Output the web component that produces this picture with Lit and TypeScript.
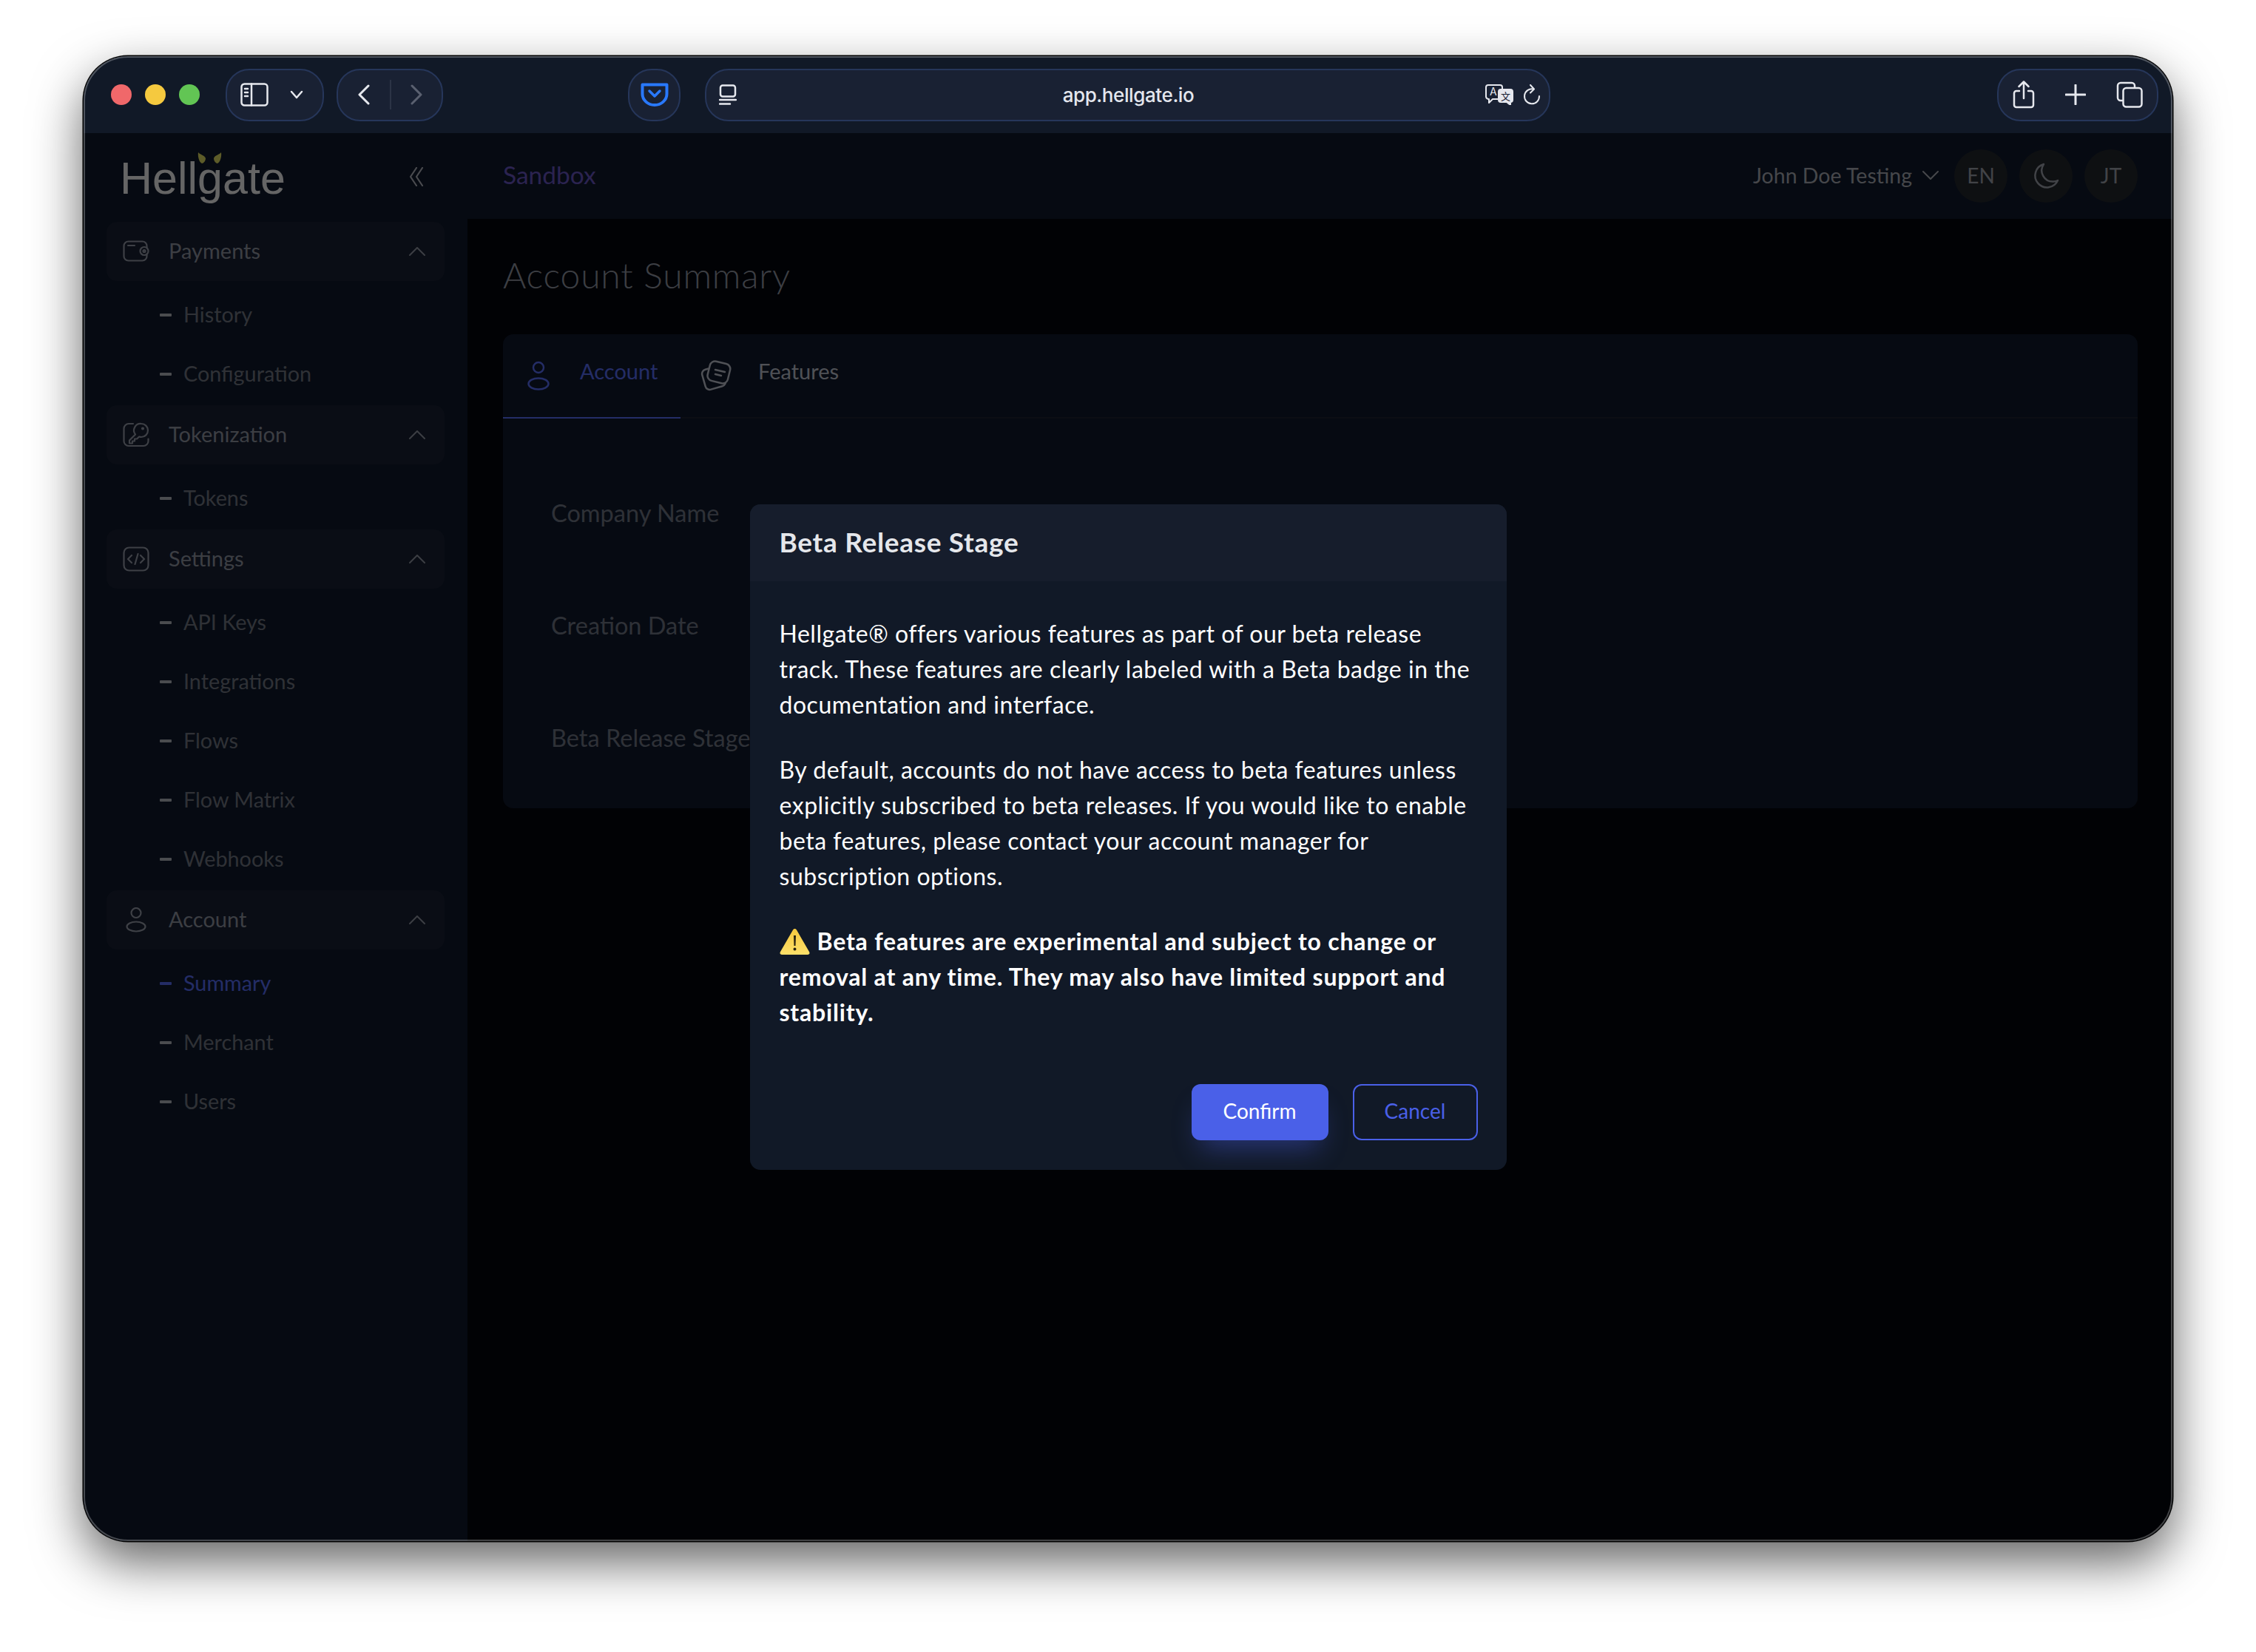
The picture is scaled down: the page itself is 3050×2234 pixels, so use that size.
import { LitElement, html, css, svg } from "lit";
import { customElement } from "lit/decorators.js";

const ICON_WALLET = svg`<rect x="1.500" y="1.500" width="31" height="26" rx="6"/><path d="M7 7h9"/><circle cx="29" cy="14.500" r="5.500" fill="#192135"/><circle cx="29" cy="14.500" r="1.500"/>`;
const ICON_KEY = svg`<path d="M14 1.500H8a6.500 6.500 0 0 0-6.500 6.500v17a6.500 6.500 0 0 0 6.500 6.500h20a6.500 6.500 0 0 0 6.500-6.500v-3"/><path d="M25 1.500a9 9 0 0 1 0 18c-1 0-2-.2-2.800-.5L19 22h-3v3h-3v3H9v-4l8-8a9 9 0 0 1 8-14.500z"/><circle cx="27" cy="8" r="1"/>`;
const ICON_CODE = svg`<rect x="1.500" y="1.500" width="33" height="31" rx="7"/><path d="M12 12l-5 5 5 5M24 12l5 5-5 5M20.500 10l-4 14"/>`;
const ICON_USER = svg`<circle cx="18" cy="7.500" r="6.500"/><ellipse cx="18" cy="26" rx="12.500" ry="6.500"/>`;

const NAV = [
  { label: "Payments", icon: ICON_WALLET, box: "0 0 36 30", items: ["History", "Configuration"] },
  { label: "Tokenization", icon: ICON_KEY, box: "0 0 36 33", items: ["Tokens"] },
  { label: "Settings", icon: ICON_CODE, box: "0 0 36 34", items: ["API Keys", "Integrations", "Flows", "Flow Matrix", "Webhooks"] },
  { label: "Account", icon: ICON_USER, box: "0 0 36 34", items: ["Summary", "Merchant", "Users"] },
];

@customElement("app-root")
export class AppRoot extends LitElement {
  static styles = css`
    :host {
      display: block;
      width: 3050px;
      height: 2234px;
      padding: 76px 113px 150px;
      box-sizing: border-box;
      background: #fff;
      font-family: Lato, "Open Sans", sans-serif;
      overflow: hidden;
    }
    svg {
      display: block;
      flex: none;
      fill: none;
      stroke: currentColor;
      stroke-linecap: round;
      stroke-linejoin: round;
    }

    .window {
      width: 2824px;
      height: 2008px;
      display: flex;
      flex-direction: column;
      border-radius: 60px;
      overflow: hidden;
      position: relative;
      background: #111927;
    }
    .shadow {
      position: absolute;
      left: 113px;
      top: 76px;
      width: 2824px;
      height: 2008px;
      border-radius: 60px;
      box-shadow: 0 0 0 1.500px #000, 0 28px 68px rgba(0, 0, 0, 0.62);
    }
    .rim {
      position: absolute;
      inset: 0;
      border-radius: 60px;
      border: 2px solid rgba(255, 255, 255, 0.26);
      pointer-events: none;
      z-index: 5;
    }

    /* browser chrome */
    .toolbar {
      height: 104px;
      flex: none;
      display: flex;
      align-items: center;
      padding: 0 19px 0 37px;
      background: #111927;
      color: #e6e8ee;
    }
    .lights {
      display: flex;
      gap: 18px;
      margin-right: 35px;
    }
    .lights i {
      width: 28px;
      height: 28px;
      border-radius: 50%;
    }
    .pill {
      height: 71px;
      box-sizing: border-box;
      display: flex;
      align-items: center;
      background: #192133;
      border: 2px solid #26365a;
      border-radius: 32px;
    }
    .pill-side {
      width: 133px;
      padding-left: 18px;
      margin-right: 17px;
    }
    .pill-side .caret {
      margin-left: 29px;
    }
    .pill-nav {
      width: 144px;
      padding-left: 26px;
      margin-right: 250px;
    }
    .pill-nav .sep {
      width: 2px;
      height: 40px;
      background: #2c3446;
      margin: 0 26px 0 27px;
    }
    .pill-shield {
      width: 71px;
      justify-content: center;
      margin-right: 33px;
    }
    .pill-url {
      width: 1143px;
      padding: 0 11px 0 17px;
      position: relative;
    }
    .url {
      position: absolute;
      left: 2px;
      right: 0;
      top: 18px;
      text-align: center;
      font-size: 26px;
      font-weight: 500;
      font-family: Inter, sans-serif;
      letter-spacing: -0.400px;
      color: #e4e7ee;
    }
    .pill-url .translate {
      margin-left: auto;
    }
    .pill-url .reload {
      margin-left: 13px;
    }
    .pill-right {
      width: 218px;
      margin-left: auto;
      padding-left: 19px;
    }
    .pill-right .plus {
      margin: 0 41px;
    }

    /* app behind the modal */
    .app {
      flex: 1;
      display: flex;
      position: relative;
      min-height: 0;
    }
    .sidebar {
      width: 519px;
      flex: none;
      box-sizing: border-box;
      padding: 0 31px;
      background: #0f1a2d;
    }
    .logo {
      height: 120px;
      display: flex;
      align-items: center;
      justify-content: space-between;
      padding: 0 25px 0 18px;
      position: relative;
    }
    .logo-text {
      font-family: "Liberation Sans", Arial, sans-serif;
      font-size: 61px;
      color: #fcfcfc;
      line-height: 60px;
      margin-top: 2px;
    }
    .horns {
      position: absolute;
      left: 123px;
      top: 26px;
    }
    .collapse {
      color: #b8bcc6;
      margin-top: -3px;
      margin-right: 3px;
    }
    .group {
      height: 80px;
      display: flex;
      align-items: center;
      background: #192135;
      border-radius: 14px;
      padding: 0 26px 0 22px;
      color: #969ba9;
      font-size: 29px;
    }
    .group .icon-slot {
      width: 62px;
      flex: none;
    }
    .group span {
      margin-top: -4px;
    }
    .group .chev {
      margin-left: auto;
    }
    .sub {
      padding: 6px 0 2px;
    }
    .item {
      height: 80px;
      box-sizing: border-box;
      display: flex;
      align-items: center;
      padding: 0 0 3px 72px;
      color: #767c88;
      font-size: 28.800px;
    }
    .item::before {
      content: "";
      width: 16px;
      height: 4px;
      background: #babdc6;
      border-radius: 1px;
      margin: 3px 16px 0 0;
    }
    .item.active {
      color: #5a70ff;
    }
    .item.active::before {
      background: #5a70ff;
    }

    .main {
      flex: 1;
      min-width: 0;
      background: #03050d;
    }
    .topbar {
      height: 116px;
      display: flex;
      align-items: center;
      padding: 0 47px 0 48px;
      background: #0f1a2d;
    }
    .env {
      font-size: 33.500px;
      color: #6b58c8;
      margin-right: auto;
      margin-top: -4px;
    }
    .user {
      display: flex;
      align-items: center;
      gap: 14px;
      font-size: 28.500px;
      color: #aeb2bb;
      margin-right: 5px;
      padding-bottom: 3px;
    }
    .circle {
      width: 72px;
      height: 72px;
      border-radius: 50%;
      background: #25282f;
      display: flex;
      align-items: center;
      justify-content: center;
      font-size: 28px;
      color: #a4a8b2;
      margin-left: 16px;
    }
    .circle span {
      margin-top: -3px;
    }
    .content {
      padding: 46px 47px 0 48px;
    }
    .title {
      font-size: 48px;
      line-height: 60px;
      font-weight: 300;
      letter-spacing: 0.800px;
      color: #969ba9;
      margin: 0 0 50px;
    }
    .card {
      background: #111a2d;
      border-radius: 14px;
    }
    .tabs {
      display: flex;
      height: 114px;
      box-sizing: border-box;
      border-bottom: 2px solid #1e2434;
    }
    .tab {
      display: flex;
      align-items: center;
      font-size: 29px;
      color: #c6cad6;
      margin-bottom: -2px;
      border-bottom: 2px solid transparent;
    }
    .tab span {
      margin-top: -14px;
    }
    .tab.active {
      color: #5a70ff;
      border-bottom-color: #5a70ff;
      width: 240px;
      box-sizing: border-box;
      padding-left: 33px;
    }
    .tab.active svg {
      margin-right: 41px;
    }
    .tab.features {
      padding-left: 27px;
    }
    .tab.features svg {
      margin-right: 35px;
    }
    .rows {
      padding: 51px 65px 20px;
    }
    .row {
      height: 152px;
      display: flex;
      align-items: center;
      font-size: 32.500px;
      color: #747a8a;
    }

    /* modal */
    .overlay {
      position: absolute;
      inset: 0;
      display: flex;
      align-items: center;
      justify-content: center;
      background: rgba(0, 0, 0, 0.6);
    }
    .dialog {
      width: 1023px;
      height: 900px;
      box-sizing: border-box;
      background: #111927;
      border-radius: 14px;
      overflow: hidden;
      display: flex;
      flex-direction: column;
      color: #fff;
    }
    .dialog-head {
      height: 104px;
      flex: none;
      display: flex;
      align-items: center;
      padding: 0 40px 4px;
      box-sizing: border-box;
      background: #161d2c;
      font-size: 37px;
      font-weight: 700;
      letter-spacing: 0.700px;
      color: #e5e7eb;
    }
    .dialog-body {
      padding: 47px 40px 0;
      font-size: 32px;
      letter-spacing: 0.520px;
      line-height: 48px;
      white-space: nowrap;
    }
    .dialog-body p {
      margin: 0 0 40px;
    }
    .warn {
      font-weight: 700;
      letter-spacing: 0.800px;
    }
    .warn svg {
      display: inline-block;
      vertical-align: -6px;
      margin-right: 10px;
    }
    .dialog-foot {
      margin-top: auto;
      display: flex;
      justify-content: flex-end;
      gap: 33px;
      padding: 0 39px 40px;
    }
    button {
      height: 76px;
      border-radius: 12px;
      font: inherit;
      font-size: 28px;
      box-sizing: border-box;
      padding: 0 0 4px;
    }
    .confirm {
      width: 185px;
      border: none;
      background: #4a60e8;
      color: #fff;
      box-shadow: 0 22px 36px -12px rgba(74, 96, 232, 0.42);
    }
    .cancel {
      width: 169px;
      border: 2.500px solid #4a60e8;
      background: transparent;
      color: #4a60e8;
    }
  `;

  renderToolbar() {
    return html`
      <div class="toolbar">
        <div class="lights">
          <i style="background:#f0686a"></i>
          <i style="background:#f5c93f"></i>
          <i style="background:#62c554"></i>
        </div>
        <div class="pill pill-side">
          <svg width="38" height="32" viewBox="0 0 38 32" stroke-width="2.500">
            <rect x="1.500" y="1.500" width="35" height="29" rx="4" />
            <path d="M15 1.500v29M6 8h4M6 13h4M6 18h4" />
          </svg>
          <svg class="caret" width="18" height="12" viewBox="0 0 18 12" stroke-width="2.500"><path d="M2 2l7 8 7-8" /></svg>
        </div>
        <div class="pill pill-nav">
          <svg width="17" height="28" viewBox="0 0 17 28" stroke-width="3"><path d="M15 2L3 14l12 12" /></svg>
          <div class="sep"></div>
          <svg width="17" height="28" viewBox="0 0 17 28" stroke-width="3" style="color:#5a6070"><path d="M2 2l12 12L2 26" /></svg>
        </div>
        <div class="pill pill-shield">
          <svg width="38" height="32" viewBox="0 0 38 32" stroke-width="4" style="color:#2979ff">
            <path d="M2.500 2.500h33V15a16.500 15 0 0 1-33 0z" />
            <path d="M12 11l7 7 7-7" stroke-width="3.500" />
          </svg>
        </div>
        <div class="pill pill-url">
          <svg width="24" height="28" viewBox="0 0 24 28" stroke-width="2.500">
            <rect x="2" y="1.500" width="20" height="15" rx="3" />
            <path d="M1 21h22M1 26.500h14" />
          </svg>
          <span class="url">app.hellgate.io</span>
          <svg class="translate" width="38" height="28" viewBox="0 0 38 28" stroke-width="2">
            <path d="M4 1h16a3 3 0 0 1 3 3v13a3 3 0 0 1-3 3H10l-5 5v-5a4 4 0 0 1-4-3V4a3 3 0 0 1 3-3z" fill="#192133" />
            <text x="6" y="15" font-size="14" fill="currentColor" stroke="none" font-family="Inter">A</text>
            <path d="M21 7h13a3 3 0 0 1 3 3v11a3 3 0 0 1-3 3v4l-5-4h-8a3 3 0 0 1-3-3V10a3 3 0 0 1 3-3z" fill="currentColor" />
            <text x="21" y="21" font-size="13" fill="#192133" stroke="none" font-family="Noto Sans CJK SC">文</text>
          </svg>
          <svg class="reload" width="24" height="28" viewBox="0 0 24 28" stroke-width="2">
            <path d="M14 6.500A10 10 0 1 0 22 16" />
            <path d="M10 1l5 5.500-5 5" />
          </svg>
        </div>
        <div class="pill pill-right">
          <svg width="30" height="38" viewBox="0 0 30 38" stroke-width="2.500">
            <path d="M9 14H5a3 3 0 0 0-3 3v16a3 3 0 0 0 3 3h20a3 3 0 0 0 3-3V17a3 3 0 0 0-3-3h-4" />
            <path d="M15 24V2M8.500 8L15 1.500 21.500 8" />
          </svg>
          <svg class="plus" width="28" height="28" viewBox="0 0 28 28" stroke-width="3"><path d="M14 1v26M1 14h26" /></svg>
          <svg width="36" height="36" viewBox="0 0 36 36" stroke-width="2.500">
            <path d="M8 26H6a4 4 0 0 1-4-4V6a4 4 0 0 1 4-4h15a4 4 0 0 1 4 4v2" />
            <rect x="9.500" y="9" width="25" height="25.500" rx="4" />
          </svg>
        </div>
      </div>
    `;
  }

  renderSidebar() {
    return html`
      <aside class="sidebar">
        <div class="logo">
          <span class="logo-text">Hellgate</span>
          <svg class="horns" width="33" height="16" viewBox="0 0 33 16" style="fill:#e8e666;stroke:none">
            <path d="M1 0c2 3 9 4 10 8 0 4-3 7-5 7C3 14 0 7 1 0z" />
            <path d="M32 0c-2 3-9 4-10 8 0 4 3 7 5 7 3-1 6-8 5-15z" />
          </svg>
          <svg class="collapse" width="20" height="26" viewBox="0 0 20 26" stroke-width="2.200"><path d="M10 1L2 13l8 12M18 1l-8 12 8 12" /></svg>
        </div>
        ${NAV.map(
          (g) => html`
            <div class="group">
              <div class="icon-slot">
                <svg width="36" height="34" viewBox=${g.box} stroke-width="2.200" style="color:#9ba0ae">${g.icon}</svg>
              </div>
              <span>${g.label}</span>
              <svg class="chev" width="22" height="12" viewBox="0 0 22 12" stroke-width="2"><path d="M1 11L11 1l10 10" /></svg>
            </div>
            <div class="sub">
              ${g.items.map((it) => html`<div class="item ${it === "Summary" ? "active" : ""}">${it}</div>`)}
            </div>
          `
        )}
      </aside>
    `;
  }

  renderMain() {
    return html`
      <div class="main">
        <div class="topbar">
          <span class="env">Sandbox</span>
          <div class="user">
            John Doe Testing
            <svg width="22" height="12" viewBox="0 0 22 12" stroke-width="2"><path d="M1 1l10 10L21 1" /></svg>
          </div>
          <div class="circle"><span>EN</span></div>
          <div class="circle">
            <svg width="36" height="36" viewBox="0 0 36 36" stroke-width="2.500">
              <path d="M15 2a16 16 0 1 0 19 22c-2 1-4 1.500-6 1.500A15 15 0 0 1 15 2z" />
            </svg>
          </div>
          <div class="circle"><span>JT</span></div>
        </div>
        <div class="content">
          <h1 class="title">Account Summary</h1>
          <div class="card">
            <div class="tabs">
              <div class="tab active">
                <svg width="30" height="40" viewBox="0 0 30 40" stroke-width="2.500">
                  <circle cx="15" cy="9" r="7" />
                  <ellipse cx="15" cy="31" rx="13.500" ry="7.500" />
                </svg>
                <span>Account</span>
              </div>
              <div class="tab features">
                <svg width="43" height="44" viewBox="0 0 43 44" stroke-width="2.500">
                  <rect x="4" y="11" width="28" height="28" rx="6" transform="rotate(-16 18 25)" />
                  <rect x="11" y="4" width="28" height="27" rx="7" fill="#111a2d" transform="rotate(14 25 17)" />
                  <path d="M20 14l13 3M20 20l8 2" />
                </svg>
                <span>Features</span>
              </div>
            </div>
            <div class="rows">
              <div class="row">Company Name</div>
              <div class="row">Creation Date</div>
              <div class="row">Beta Release Stage</div>
            </div>
          </div>
        </div>
      </div>
    `;
  }

  renderDialog() {
    return html`
      <div class="overlay">
        <div class="dialog">
          <div class="dialog-head">Beta Release Stage</div>
          <div class="dialog-body">
            <p>
              Hellgate® offers various features as part of our beta release<br />
              track. These features are clearly labeled with a Beta badge in the<br />
              documentation and interface.
            </p>
            <p>
              By default, accounts do not have access to beta features unless<br />
              explicitly subscribed to beta releases. If you would like to enable<br />
              beta features, please contact your account manager for<br />
              subscription options.
            </p>
            <p class="warn">
              <svg width="41" height="36" viewBox="0 0 41 36" style="stroke:none">
                <defs>
                  <linearGradient id="warn" x1="0" y1="0" x2="0" y2="1">
                    <stop offset="0" stop-color="#f7c93e" />
                    <stop offset="1" stop-color="#fde06a" />
                  </linearGradient>
                </defs>
                <path d="M20.500 1c1 0 2 .6 2.600 1.800l17 29.500c1 2 0 3.700-2.200 3.700H3.100C.9 36-.1 34.300.9 32.300l17-29.500C18.500 1.600 19.500 1 20.500 1z" fill="url(#warn)" />
                <path d="M19 10h3l-.5 14h-2zM20.500 26.500a2 2 0 1 1 0 4 2 2 0 0 1 0-4z" fill="#2a2310" />
              </svg>Beta features are experimental and subject to change or<br />
              removal at any time. They may also have limited support and<br />
              stability.
            </p>
          </div>
          <div class="dialog-foot">
            <button class="confirm">Confirm</button>
            <button class="cancel">Cancel</button>
          </div>
        </div>
      </div>
    `;
  }

  render() {
    return html`
      <div class="shadow"></div>
      <div class="window">
        ${this.renderToolbar()}
        <div class="app">
          ${this.renderSidebar()} ${this.renderMain()} ${this.renderDialog()}
        </div>
        <div class="rim"></div>
      </div>
    `;
  }
}
